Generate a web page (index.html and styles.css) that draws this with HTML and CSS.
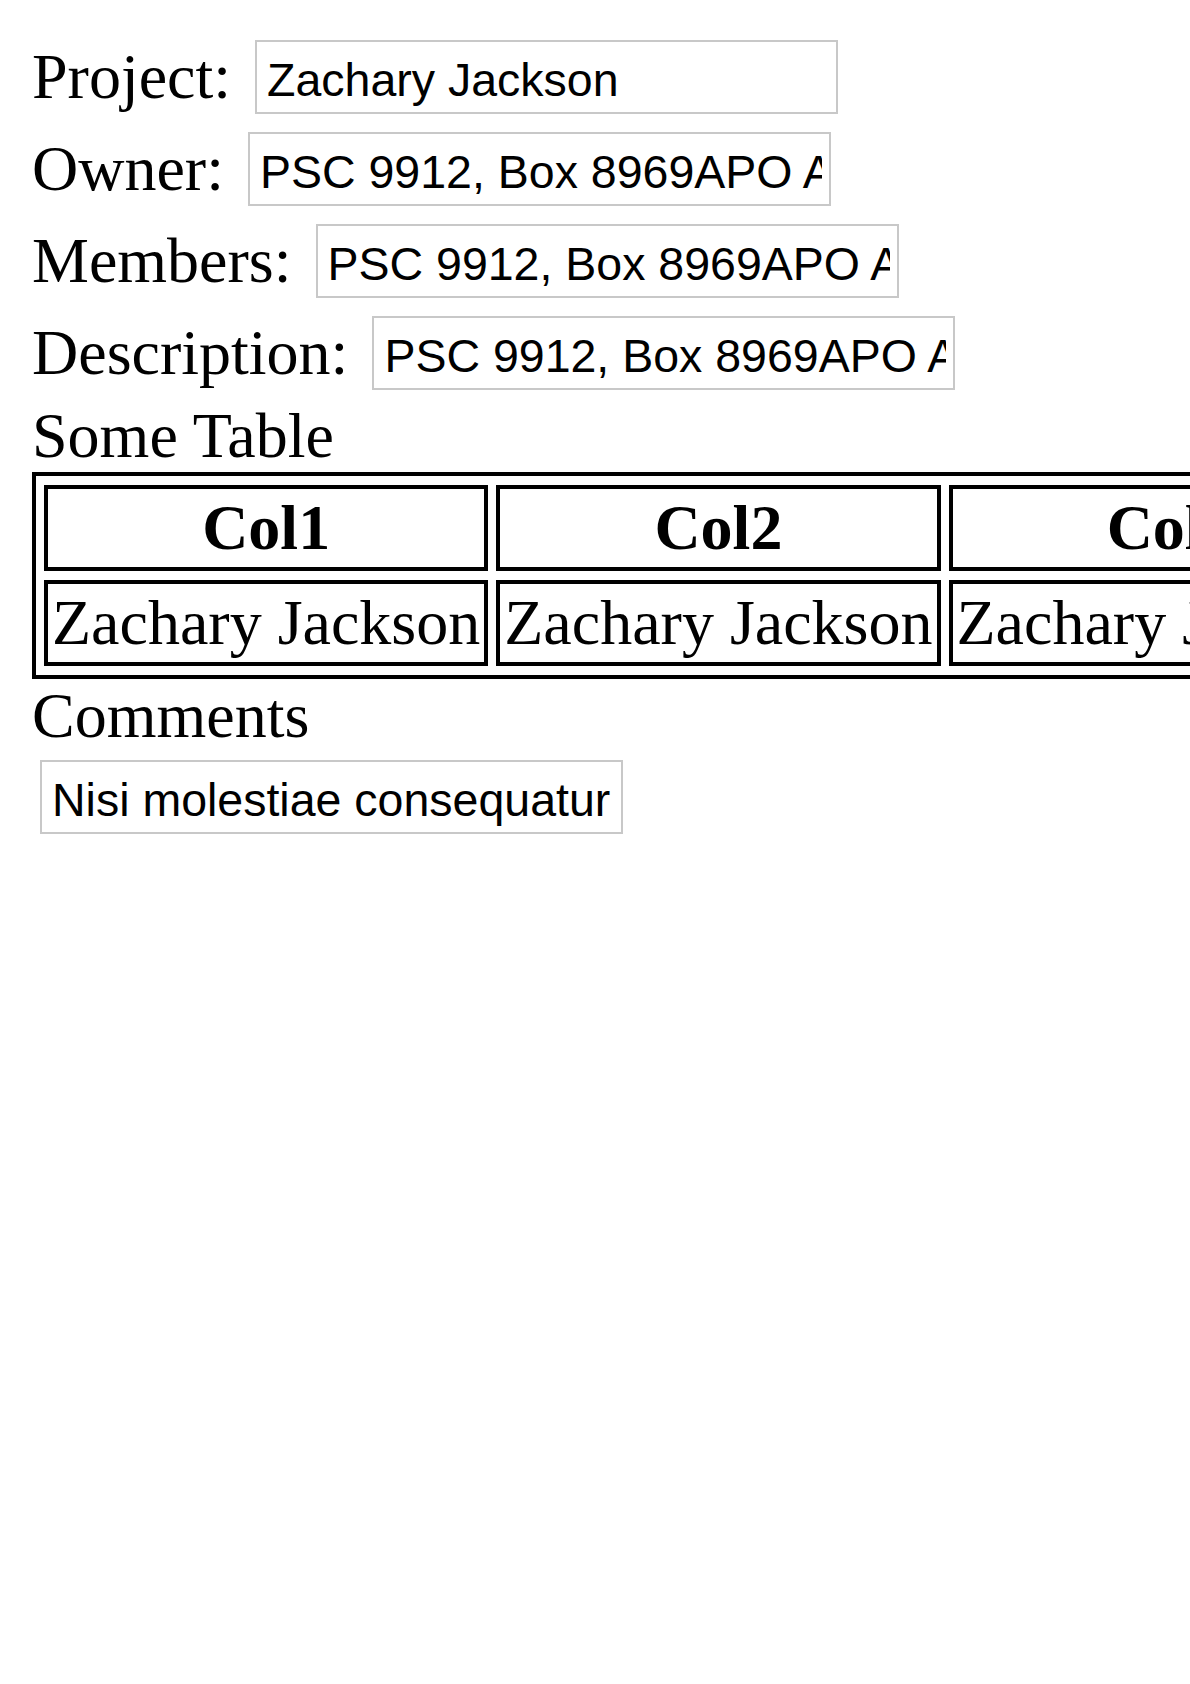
FILE: index.html
```html
<!DOCTYPE html>
<html lang="en">
<head>
<meta charset="utf-8">
<title>Project</title>
<link rel="stylesheet" href="styles.css">
</head>
<body>
<div class="page">
  <div class="field">
    <span class="label">Project:</span>
    <input class="box" type="text" value="Zachary Jackson">
  </div>
  <div class="field">
    <span class="label">Owner:</span>
    <input class="box" type="text" value="PSC 9912, Box 8969APO AA 50947">
  </div>
  <div class="field">
    <span class="label">Members:</span>
    <input class="box" type="text" value="PSC 9912, Box 8969APO AA 50947">
  </div>
  <div class="field">
    <span class="label">Description:</span>
    <input class="box" type="text" value="PSC 9912, Box 8969APO AA 50947">
  </div>
  <div class="heading">Some Table</div>
  <table class="grid">
    <thead>
      <tr><th>Col1</th><th>Col2</th><th>Col3</th></tr>
    </thead>
    <tbody>
      <tr><td>Zachary Jackson</td><td>Zachary Jackson</td><td>Zachary Jackson</td></tr>
    </tbody>
  </table>
  <div class="heading">Comments</div>
  <input class="box comment" type="text" value="Nisi molestiae consequatur quia quis">
</div>
</body>
</html>
```

FILE: styles.css
```css
html {
  overflow-x: hidden;
  background: #ffffff;
}

body {
  margin: 0;
  font-family: "Liberation Serif", "Times New Roman", serif;
  color: #000000;
}

.page {
  padding: 31px 0 40px 32px;
}

.field {
  display: flex;
  align-items: center;
  gap: 24px;
  height: 92px;
}

.label {
  font-size: 64px;
  line-height: 92px;
  white-space: nowrap;
}

.box {
  box-sizing: border-box;
  width: 583px;
  height: 74px;
  margin: 0;
  padding: 6px 7px 0 10px;
  border: 2px solid #c8c8c8;
  border-radius: 0;
  background: #ffffff;
  font-family: "Liberation Sans", Arial, Helvetica, sans-serif;
  font-size: 46.5px;
  color: #000000;
  outline: none;
}

.heading {
  font-size: 64px;
  line-height: 73px;
  white-space: nowrap;
}

.grid {
  border: 4px solid #000000;
  border-spacing: 8px 9px;
  font-size: 64px;
  line-height: 70px;
  white-space: nowrap;
}

.grid th,
.grid td {
  border: 4px solid #000000;
  padding: 4px;
}

.grid th {
  font-weight: bold;
  text-align: center;
}

.grid td {
  text-align: left;
}

.comment {
  display: block;
  margin: 8px 0 0 8px;
}
```
